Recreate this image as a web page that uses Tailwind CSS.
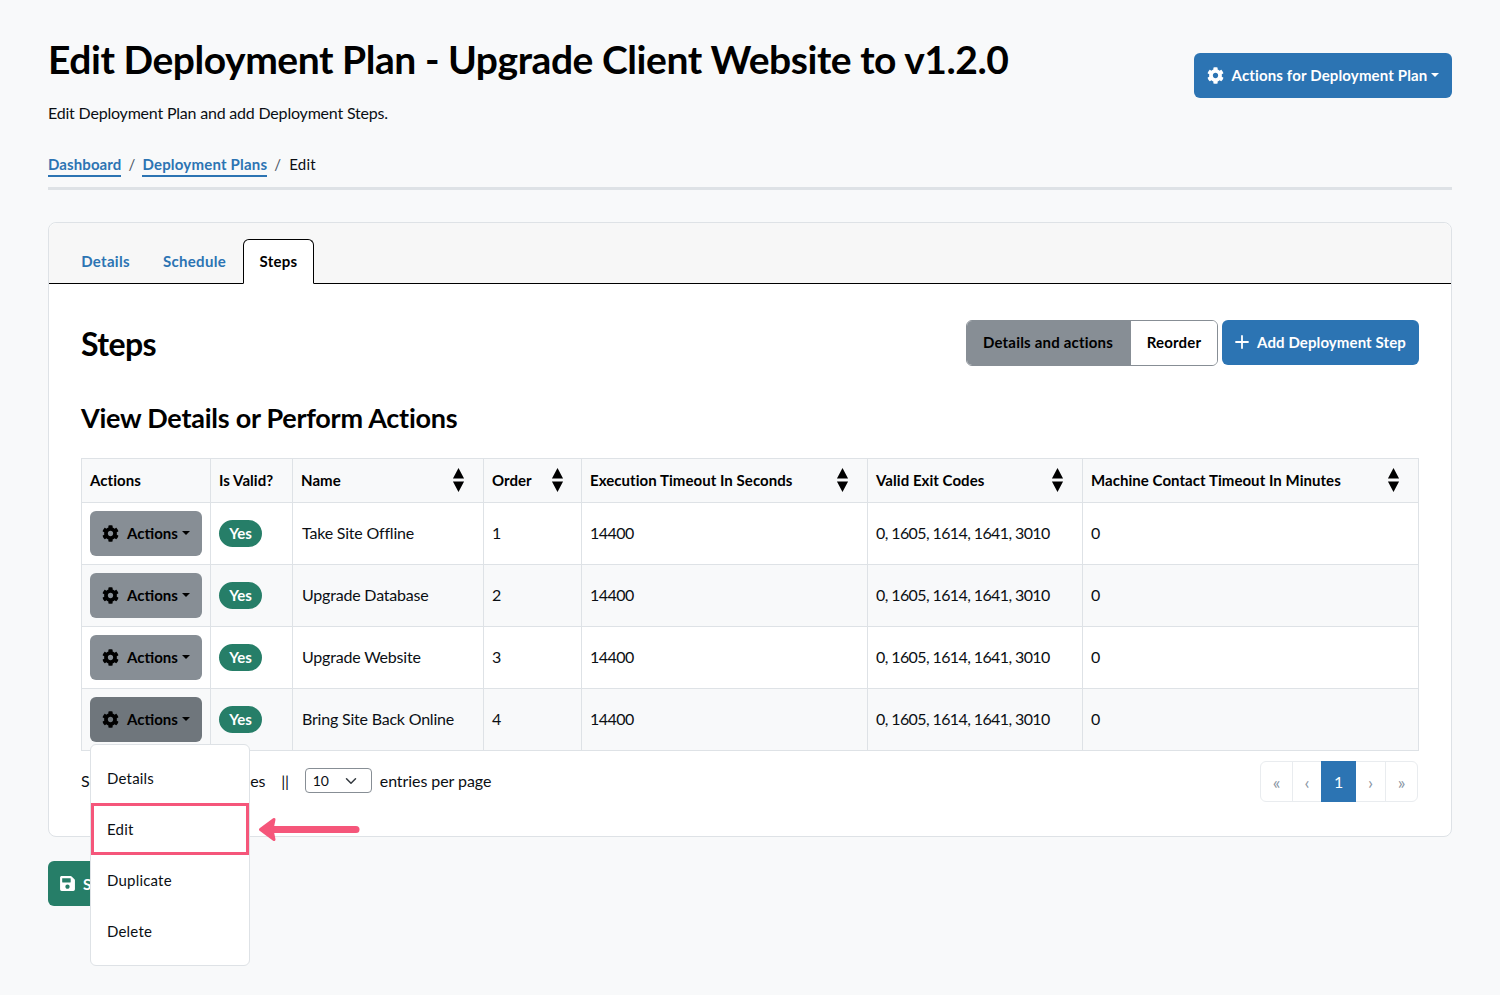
<!DOCTYPE html>
<html lang="en">
<head>
    <meta charset="UTF-8">
    <title>Edit Deployment Plan</title>
    <script src="https://cdn.jsdelivr.net/npm/@tailwindcss/browser@4"></script>
</head>
<body class="bg-[#f8f9fa] text-[#0b0f14] font-[family-name:Lato,sans-serif] text-[16px] leading-6 tracking-[-0.2px] relative h-[995px] overflow-hidden">
    <svg class="hidden">
        <symbol id="cog" viewBox="0 0 512 512"><path fill="currentColor" d="M487.4 315.7l-42.6-24.6c4.3-23.2 4.3-47 0-70.2l42.6-24.6c4.9-2.8 7.1-8.6 5.5-14-11.1-35.6-30-67.8-54.7-94.6-3.8-4.1-10-5.1-14.8-2.3L380.8 110c-17.9-15.4-38.5-27.3-60.8-35.1V25.8c0-5.6-3.9-10.5-9.4-11.7-36.7-8.2-74.3-7.8-109.2 0-5.5 1.2-9.4 6.1-9.4 11.7V75c-22.2 7.9-42.8 19.8-60.8 35.1L88.7 85.5c-4.9-2.8-11-1.9-14.8 2.3-24.7 26.7-43.6 58.9-54.7 94.6-1.7 5.4.6 11.2 5.5 14L67.3 221c-4.3 23.2-4.3 47 0 70.2l-42.6 24.6c-4.9 2.8-7.1 8.6-5.5 14 11.1 35.6 30 67.8 54.7 94.6 3.8 4.1 10 5.1 14.8 2.3l42.6-24.6c17.9 15.4 38.5 27.3 60.8 35.1v49.2c0 5.6 3.9 10.5 9.4 11.7 36.7 8.2 74.3 7.8 109.2 0 5.5-1.2 9.4-6.1 9.4-11.7v-49.2c22.2-7.9 42.8-19.8 60.8-35.1l42.6 24.6c4.9 2.8 11 1.9 14.8-2.3 24.7-26.7 43.6-58.9 54.7-94.6 1.5-5.5-.7-11.3-5.6-14.1zM256 336c-44.1 0-80-35.9-80-80s35.9-80 80-80 80 35.9 80 80-35.9 80-80 80z"/></symbol>
        <symbol id="sort" viewBox="0 0 14 26"><path fill="currentColor" d="M7 0l6 11.500H1zM7 26l-6-11.500h12z"/></symbol>
    </svg>

    <div class="px-12 pt-[35px]">
        <!-- page header -->
        <div class="flex justify-between items-start">
            <div>
                <h1 class="text-[39px] leading-12 font-bold text-black tracking-[-0.45px]">Edit Deployment Plan - Upgrade Client Website to v1.2.0</h1>
                <p class="mt-[18px]">Edit Deployment Plan and add Deployment Steps.</p>
            </div>
            <button class="mt-[18px] h-[45px] w-[258px] bg-[#2c74b3] text-white rounded-md font-bold text-[15px] tracking-[0.15px] flex items-center justify-center gap-2 pb-px">
                <svg class="w-[17px] h-[17px]"><use href="#cog"/></svg>
                <span>Actions for Deployment Plan</span>
                <span class="-ml-1 border-x-4 border-x-transparent border-t-4 border-t-white"></span>
            </button>
        </div>

        <!-- breadcrumb -->
        <div class="mt-[27px] pb-2.5 border-b-[3px] border-[#dee2e6] flex gap-[7px] h-[38px] text-[15px] tracking-[0.2px]">
            <a class="font-bold text-[#2c74b3] border-b-2 border-[#2c74b3] h-[25px] tracking-[0.1px]">Dashboard</a>
            <span class="text-gray-600">/</span>
            <a class="font-bold text-[#2c74b3] border-b-2 border-[#2c74b3] h-[25px]">Deployment Plans</a>
            <span class="text-gray-600">/</span>
            <span class="ml-px">Edit</span>
        </div>

        <!-- card -->
        <div class="mt-8 h-[615px] bg-white border border-[#dee2e6] rounded-lg">
            <div class="h-[61px] bg-[#f7f7f7] rounded-t-lg border-b border-black flex items-end px-4 text-[15px] tracking-[0.3px]">
                <a class="h-11 w-[81px] flex items-center justify-center font-bold text-[#2c74b3]">Details</a>
                <a class="h-11 w-[97px] flex items-center justify-center font-bold text-[#2c74b3]">Schedule</a>
                <a class="h-[45px] w-[71px] -mb-px pb-0.5 flex items-center justify-center font-bold text-black bg-white border border-black border-b-white rounded-t-md">Steps</a>
            </div>

            <div class="px-8 pt-9">
                <div class="flex justify-between items-center h-[46px]">
                    <h2 class="mt-0.5 text-[32px] leading-10 font-bold text-black tracking-[-0.6px]">Steps</h2>
                    <div class="flex gap-1 items-start tracking-[0.2px]">
                        <div class="flex h-[46px] rounded-md border border-[#878e95] font-bold text-[15px] text-black overflow-hidden">
                            <span class="w-[164px] pb-0.5 pr-0.5 bg-[#878e95] flex items-center justify-center">Details and actions</span>
                            <span class="w-[86px] pb-0.5 bg-white flex items-center justify-center">Reorder</span>
                        </div>
                        <button class="h-[45px] w-[197px] pb-px bg-[#2c74b3] text-white rounded-md font-bold text-[15px] tracking-[0.1px] flex items-center justify-center gap-2">
                            <svg class="w-[14px] h-[14px]" viewBox="0 0 14 14"><path d="M7 1v12M1 7h12" stroke="currentColor" stroke-width="1.800" stroke-linecap="round"/></svg>
                            <span>Add Deployment Step</span>
                        </button>
                    </div>
                </div>

                <h3 class="mt-[35px] text-[27px] leading-[34px] font-bold text-black tracking-[-0.25px]">View Details or Perform Actions</h3>

                <table class="mt-[23px] w-[1338px] table-fixed border-collapse text-[16px]">
                    <colgroup>
                        <col class="w-[129px]"><col class="w-[82px]"><col class="w-[191px]"><col class="w-[98px]"><col class="w-[286px]"><col class="w-[215px]"><col>
                    </colgroup>
                    <thead class="bg-[#f8f9fa] text-[15px] text-black tracking-[0.05px]">
                        <tr class="h-[44px]">
                            <th class="border border-[#dee2e6] px-2 pb-0.5 text-left font-bold">Actions</th>
                            <th class="border border-[#dee2e6] px-2 pb-0.5 text-left font-bold">Is Valid?</th>
                            <th class="border border-[#dee2e6] px-2 pb-0.5 text-left font-bold"><div class="flex justify-between items-center pr-[10px]">Name<svg class="w-[13px] h-[26px]"><use href="#sort"/></svg></div></th>
                            <th class="border border-[#dee2e6] px-2 pb-0.5 text-left font-bold"><div class="flex justify-between items-center pr-[9px]">Order<svg class="w-[13px] h-[26px]"><use href="#sort"/></svg></div></th>
                            <th class="border border-[#dee2e6] px-2 pb-0.5 text-left font-bold"><div class="flex justify-between items-center pr-[10px]">Execution Timeout In Seconds<svg class="w-[13px] h-[26px]"><use href="#sort"/></svg></div></th>
                            <th class="border border-[#dee2e6] px-2 pb-0.5 text-left font-bold"><div class="flex justify-between items-center pr-[10px]">Valid Exit Codes<svg class="w-[13px] h-[26px]"><use href="#sort"/></svg></div></th>
                            <th class="border border-[#dee2e6] px-2 pb-0.5 text-left font-bold"><div class="flex justify-between items-center pr-[10px]">Machine Contact Timeout In Minutes<svg class="w-[13px] h-[26px]"><use href="#sort"/></svg></div></th>
                        </tr>
                    </thead>
                    <tbody id="rows"></tbody>
                </table>

                <!-- table footer -->
                <div class="mt-[10px] flex justify-between items-center h-[41px]">
                    <div class="flex items-center pb-0.5">
                        <span>Showing 1 to 4 of 4 entries</span>
                        <span class="ml-4">||</span>
                        <div class="ml-4 w-[67px] h-[25px] border border-[#878e95] rounded-[4px] flex items-center justify-between pl-[7px] pr-[14px] text-[14px]">
                            <span>10</span>
                            <svg class="w-3 h-3" viewBox="0 0 16 16"><path d="M2 5l6 6 6-6" fill="none" stroke="#343a40" stroke-width="2" stroke-linecap="round" stroke-linejoin="round"/></svg>
                        </div>
                        <span class="ml-2 tracking-[-0.07px]">entries per page</span>
                    </div>
                    <div class="flex h-[41px] mr-px border border-[#e9ecef] rounded-md text-[#8a96a3] text-[18px]">
                        <span class="w-[32px] flex items-center justify-center border-r border-[#e9ecef]">«</span>
                        <span class="w-[28px] flex items-center justify-center">‹</span>
                        <span class="w-[35px] -my-px flex items-center justify-center bg-[#2c74b3] text-white text-[16px]">1</span>
                        <span class="w-[30px] flex items-center justify-center border-r border-[#e9ecef]">›</span>
                        <span class="w-[31px] flex items-center justify-center">»</span>
                    </div>
                </div>
            </div>
        </div>

        <button class="mt-6 h-[45px] w-[90px] bg-[#267e68] text-white rounded-md font-bold text-[15px] flex items-center gap-2 pl-3">
            <svg class="w-[15px] h-[17px]" viewBox="0 0 448 512"><path fill="currentColor" d="M433.941 129.941l-83.882-83.882A48 48 0 0 0 316.118 32H48C21.490 32 0 53.490 0 80v352c0 26.510 21.490 48 48 48h352c26.510 0 48-21.490 48-48V163.882a48 48 0 0 0-14.059-33.941zM224 416c-35.346 0-64-28.654-64-64 0-35.346 28.654-64 64-64s64 28.654 64 64c0 35.346-28.654 64-64 64zm96-304.520V212c0 6.627-5.373 12-12 12H76c-6.627 0-12-5.373-12-12V108c0-6.627 5.373-12 12-12h228.520c3.183 0 6.235 1.264 8.485 3.515l3.480 3.480A11.996 11.996 0 0 1 320 111.480z"/></svg>
            <span>Save</span>
        </button>
    </div>

    <!-- open dropdown menu -->
    <div class="absolute left-[90px] top-[744px] w-[160px] h-[222px] bg-white border border-[#dee2e6] rounded-md py-2 text-[15px] tracking-[0.2px]">
        <a class="h-[51px] pb-0.5 pl-4 flex items-center">Details</a>
        <a class="h-[52px] -my-px relative flex items-center border-[3px] border-[#f5567a] pl-[13px]">Edit</a>
        <a class="h-[51px] pl-4 flex items-center">Duplicate</a>
        <a class="h-[51px] pl-4 flex items-center">Delete</a>
    </div>

    <!-- callout arrow -->
    <svg class="absolute left-[258px] top-[817px] w-[102px] h-[25px]" viewBox="0 0 102 25">
        <path d="M98 12.500H10" stroke="#f5567a" stroke-width="7" stroke-linecap="round"/>
        <path d="M16 2.500L2.500 12.500L16 22.500L14 12.500Z" fill="#f5567a" stroke="#f5567a" stroke-width="3" stroke-linejoin="round"/>
    </svg>

    <script>
        const steps = ['Take Site Offline', 'Upgrade Database', 'Upgrade Website', 'Bring Site Back Online'];
        const rowHtml = steps.map((name, i) => `
            <tr class="h-[62px] ${i % 2 ? 'bg-[#f8f9fa]' : 'bg-white'}">
                <td class="border border-[#dee2e6] px-2">
                    <button class="w-[112px] h-[45px] pb-px ${i === 3 ? 'bg-[#6f767c]' : 'bg-[#878e95]'} rounded-md text-black font-bold text-[15px] tracking-normal flex items-center justify-center gap-2">
                        <svg class="w-[17px] h-[17px]"><use href="#cog"/></svg>
                        <span>Actions</span>
                        <span class="-ml-1 border-x-4 border-x-transparent border-t-4 border-t-black"></span>
                    </button>
                </td>
                <td class="border border-[#dee2e6] px-2">
                    <span class="inline-flex w-[43px] h-[27px] pb-px items-center justify-center rounded-full bg-[#267e68] text-white font-bold text-[15px] tracking-normal">Yes</span>
                </td>
                <td class="border border-[#dee2e6] px-2 pl-[9px] pb-0.5">${name}</td>
                <td class="border border-[#dee2e6] px-2 pb-0.5">${i + 1}</td>
                <td class="border border-[#dee2e6] px-2 pb-0.5 tracking-[-0.5px]">14400</td>
                <td class="border border-[#dee2e6] px-2 pb-0.5 tracking-[-0.6px]">0, 1605, 1614, 1641, 3010</td>
                <td class="border border-[#dee2e6] px-2 pb-0.5">0</td>
            </tr>`).join('');
        document.getElementById('rows').innerHTML = rowHtml;
    </script>
</body>
</html>
